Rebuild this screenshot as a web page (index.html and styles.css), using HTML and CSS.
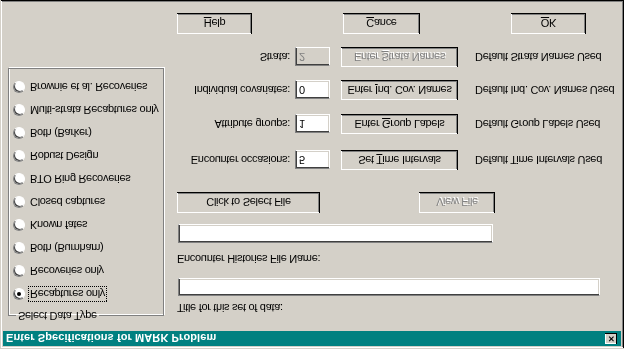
FILE: index.html
```html
<!DOCTYPE html>
<html lang="en">

<head>
    <meta charset="UTF-8">
    <meta name="viewport" content="width=device-width, initial-scale=1.0">
    <title>Enter Specifications for MARK Problem</title>
    <link rel="stylesheet" href="styles.css">
</head>

<body>
    <!-- the whole dialog is shown upside down, like the screenshot -->
    <div class="window">
        <div class="titlebar">
            <span class="title">Enter Specifications for MARK Problem</span>
            <span class="close">&#x2715;</span>
        </div>
        <div class="content">
            <div class="left">
                <fieldset class="group">
                    <legend>Select Data Type</legend>
                    <div class="radio"><span class="dot on"></span><span class="focus">Recaptures only</span></div>
                    <div class="radio"><span class="dot"></span><span>Recoveries only</span></div>
                    <div class="radio"><span class="dot"></span><span>Both (Burnham)</span></div>
                    <div class="radio"><span class="dot"></span><span>Known fates</span></div>
                    <div class="radio"><span class="dot"></span><span>Closed captures</span></div>
                    <div class="radio"><span class="dot"></span><span>BTO Ring Recoveries</span></div>
                    <div class="radio"><span class="dot"></span><span>Robust Design</span></div>
                    <div class="radio"><span class="dot"></span><span>Both (Barker)</span></div>
                    <div class="radio"><span class="dot"></span><span>Multi-strata Recaptures only</span></div>
                    <div class="radio"><span class="dot"></span><span>Brownie et al. Recoveries</span></div>
                </fieldset>
            </div>
            <div class="right">
                <div class="label first">Title for this set of data:</div>
                <div class="field title-field"></div>
                <div class="label second">Encounter Histories File Name:</div>
                <div class="field file-field"></div>
                <div class="file-buttons">
                    <div class="btn select-btn"><span>Click to Select File</span></div>
                    <div class="btn view-btn disabled"><span>View File</span></div>
                </div>
                <div class="row r1">
                    <div class="row-label">Encounter occasions:</div>
                    <div class="field small">5</div>
                    <div class="btn wide"><span>Set <u>T</u>ime Intervals</span></div>
                    <div class="note">Default Time Intervals Used</div>
                </div>
                <div class="row r2">
                    <div class="row-label">Attribute groups:</div>
                    <div class="field small">1</div>
                    <div class="btn wide"><span>Enter <u>G</u>roup Labels</span></div>
                    <div class="note">Default Group Labels Used</div>
                </div>
                <div class="row r3">
                    <div class="row-label">Individual covariates:</div>
                    <div class="field small">0</div>
                    <div class="btn wide"><span>Enter <u>I</u>nd. Cov. Names</span></div>
                    <div class="note">Default Ind. Cov. Names Used</div>
                </div>
                <div class="row r4">
                    <div class="row-label">Strata:</div>
                    <div class="field small off">2</div>
                    <div class="btn wide disabled"><span>Enter <u>S</u>trata Names</span></div>
                    <div class="note">Default Strata Names Used</div>
                </div>
                <div class="main-buttons">
                    <div class="btn help-btn"><span><u>H</u>elp</span></div>
                    <div class="btn cancel-btn"><span><u>C</u>ance</span></div>
                    <div class="btn ok-btn"><span><u>O</u>K</span></div>
                </div>
            </div>
        </div>
    </div>
</body>

</html>
```

FILE: styles.css
```css
body {
    margin: 0;
    background: #d4d0c8;
    font-family: "Liberation Sans", Arial, sans-serif;
    font-size: 11px;
    letter-spacing: -0.3px;
    color: #000;
}

.window {
    width: 624px;
    height: 349px;
    box-sizing: border-box;
    padding: 3px;
    background: #d4d0c8;
    box-shadow: inset 1px 1px 0 #d4d0c8, inset -1px -1px 0 #000,
        inset 2px 2px 0 #fff, inset -2px -2px 0 #808080;
    transform: scaleY(-1);
}

.titlebar {
    height: 15px;
    background: #008080;
    display: flex;
    align-items: center;
    justify-content: space-between;
    padding: 0 3px 0 3px;
}

.title {
    color: #fff;
    font-weight: bold;
    font-size: 11px;
    letter-spacing: 0.1px;
}

.close {
    width: 12px;
    height: 11px;
    box-sizing: border-box;
    background: #d4d0c8;
    box-shadow: inset -1px -1px 0 #000, inset 1px 1px 0 #fff;
    font-size: 8px;
    font-weight: bold;
    letter-spacing: 0;
    line-height: 11px;
    text-align: center;
    margin-right: 1px;
}

.content {
    display: flex;
}

.left {
    padding-left: 5px;
    padding-top: 8px;
}

.group {
    margin: 0;
    padding: 3px 0 0 3px;
    width: 156px;
    height: 255px;
    box-sizing: border-box;
    border: 1px solid #808080;
    box-shadow: 1px 1px 0 #fff, inset 1px 1px 0 #fff;
    min-width: 0;
}

.group legend {
    margin-left: 4px;
    padding: 0 2px;
    line-height: 14px;
}

.radio {
    height: 23px;
    display: flex;
    align-items: center;
    white-space: nowrap;
}

.dot {
    flex-shrink: 0;
    width: 12px;
    height: 12px;
    box-sizing: border-box;
    border-radius: 50%;
    background: #fff;
    border: 1px solid;
    border-color: #808080 #fff #fff #808080;
    box-shadow: inset 1px 1px 0 #404040;
    margin: 0 5px 0 1px;
    display: flex;
    align-items: center;
    justify-content: center;
}

.dot.on::after {
    content: "";
    width: 4px;
    height: 4px;
    border-radius: 50%;
    background: #000;
}

.focus {
    outline: 1px dotted #000;
    padding: 0 1px;
    margin-left: -1px;
    line-height: 14px;
}

.right {
    margin-left: 13px;
    width: 430px;
}

.label {
    line-height: 14px;
}

.label.first {
    margin-top: 16px;
}

.label.second {
    margin-top: 12px;
}

.field {
    box-sizing: border-box;
    background: #fff;
    border: 1px solid;
    border-color: #808080 #fff #fff #808080;
    box-shadow: inset 1px 1px 0 #404040, inset -1px -1px 0 #d4d0c8;
    padding-left: 3px;
    line-height: 16px;
}

.title-field {
    margin: 5px 0 0 1px;
    width: 422px;
    height: 18px;
}

.file-field {
    margin: 9px 0 0 1px;
    width: 315px;
    height: 19px;
}

.btn {
    box-sizing: border-box;
    height: 21px;
    background: #d4d0c8;
    box-shadow: inset -1px -1px 0 #000, inset 1px 1px 0 #fff,
        inset -2px -2px 0 #808080, inset 2px 2px 0 #d4d0c8;
    display: flex;
    align-items: center;
    justify-content: center;
    white-space: nowrap;
}

.btn.disabled {
    color: #808080;
    text-shadow: 1px 1px 0 #fff;
}

.file-buttons {
    display: flex;
    margin-top: 11px;
}

.select-btn {
    width: 143px;
}

.view-btn {
    width: 76px;
    margin-left: 99px;
}

.row {
    display: grid;
    grid-template-columns: 113px 35px 123px auto;
    column-gap: 5px;
    align-items: center;
    height: 20px;
}

.row .btn {
    height: 20px;
    margin-left: 6px;
}

.row .note {
    margin-left: 12px;
    white-space: nowrap;
}

.row-label {
    text-align: right;
    white-space: nowrap;
}

.field.small {
    height: 19px;
}

.field.off {
    background: #d4d0c8;
    color: #808080;
}

.r1 {
    margin-top: 22px;
}

.r2 {
    margin-top: 16px;
}

.r3 {
    margin-top: 14px;
}

.r4 {
    margin-top: 13px;
}

.main-buttons {
    display: flex;
    margin-top: 13px;
}

.help-btn {
    width: 75px;
}

.cancel-btn {
    width: 77px;
    margin-left: 91px;
}

.ok-btn {
    width: 75px;
    margin-left: 91px;
}
```
